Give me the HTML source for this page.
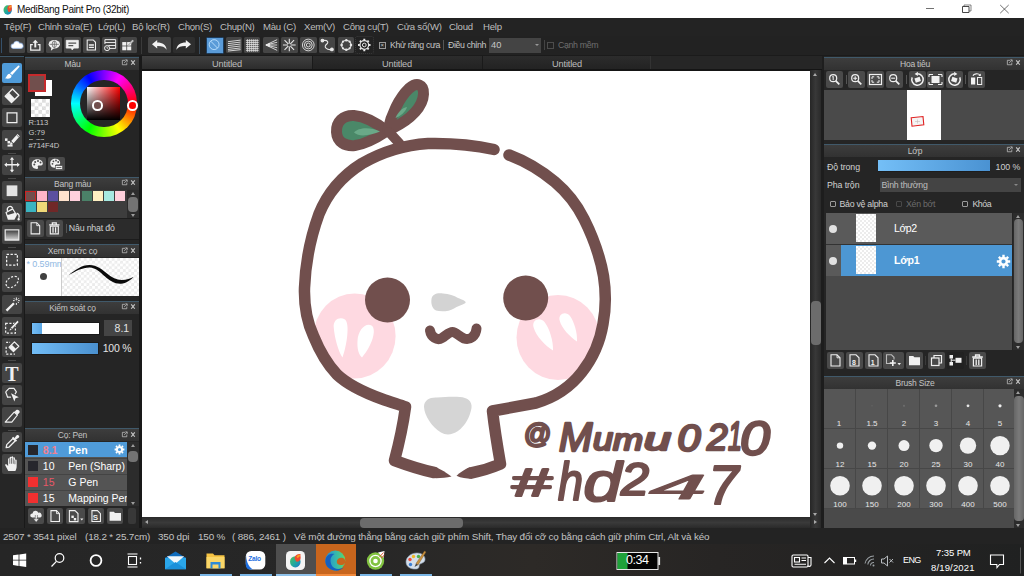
<!DOCTYPE html>
<html lang="vi">
<head>
<meta charset="utf-8">
<title>MediBang Paint Pro (32bit)</title>
<style>
*{box-sizing:border-box;margin:0;padding:0}
html,body{width:1024px;height:576px;overflow:hidden;background:#1e1e1e}
body{position:relative;font-family:"Liberation Sans","DejaVu Sans",sans-serif;font-size:9.5px;color:#cfcfcf;line-height:1}
.a{position:absolute}
.t{position:absolute;white-space:nowrap;line-height:1}
#titlebar{left:0;top:0;width:1024px;height:18px;background:#fff}
#menubar{left:0;top:18px;width:1024px;height:18px;background:#232323}
#toolbar{left:0;top:36px;width:1024px;height:20px;background:#222}
.m{position:absolute;top:21.8px;font-size:9.6px;color:#bebebe;white-space:nowrap;letter-spacing:-0.25px}
.tb{position:absolute;top:37px;width:16.6px;height:16px;background:#454545;border-radius:1.5px}
.tb svg,.lb svg,.nb svg,.sb svg{position:absolute;left:0;top:0;width:100%;height:100%}
.lb{position:absolute;left:2px;width:20px;height:19.5px;background:#444;border-radius:2px}
.ph{position:absolute;height:13px;background:linear-gradient(#3d3d3d,#323232);border-top:1px solid #40596a;font-size:8.5px;letter-spacing:-0.2px;color:#c4c4c4;text-align:center;line-height:12px}
.ph i{position:absolute;top:2px;width:6px;height:7px}
.nb{position:absolute;top:71px;width:17px;height:17px;background:#4a4a4a;border-radius:2px}
.sb{position:absolute;width:17px;height:17px;background:#4a4a4a;border-radius:2px}
.st{font-size:9.9px;color:#c4c4c4;letter-spacing:-0.16px}
</style>
</head>
<body>
<!-- ===== title bar ===== -->
<div id="titlebar" class="a"></div>
<div id="menubar" class="a"></div>
<div id="toolbar" class="a"></div>
<!-- title -->
<svg class="a" style="left:3px;top:3.500px" width="10" height="11" viewBox="0 0 10 11"><defs><linearGradient id="lg1" x1="0" y1="0" x2="1" y2="1"><stop offset="0" stop-color="#52c25a"/><stop offset=".55" stop-color="#1fa8a0"/><stop offset="1" stop-color="#1f6fd0"/></linearGradient></defs><ellipse cx="4.700" cy="6" rx="4.200" ry="4.700" fill="url(#lg1)"/><path d="M4.300 4.500C4.500 2 6.500 0.800 8.600 1.200C8.300 2.500 9.200 3.800 8.800 5.600C8.400 7.400 6.800 8.200 5.200 7.800Z" fill="#ee4a30"/><path d="M5.800 3.200C6.500 2 7.600 1.500 8.500 1.600C8.300 2.800 7.600 4 6.400 4.500Z" fill="#f6a21e"/></svg>
<div class="t" style="left:17px;top:4.500px;font-size:10px;color:#111;letter-spacing:-0.31px" id="ttl">MediBang Paint Pro (32bit)</div>
<svg class="a" style="left:920px;top:0" width="104" height="18" viewBox="0 0 104 18" fill="none" stroke="#333" stroke-width="0.7">
<path d="M6 8.500H14"/>
<path d="M42.500 6.500H49V12.500H42.500Z" stroke-width=".9"/><path d="M44 6.500V5H51V11H49" stroke-width=".6"/>
<path d="M80.200 5L88.700 13.200M88.700 5L80.200 13.200"/>
</svg>

<!-- menu -->
<div class="m" style="left:4px">Tệp(F)</div>
<div class="m" style="left:38px">Chỉnh sửa(E)</div>
<div class="m" style="left:98px">Lớp(L)</div>
<div class="m" style="left:132px">Bộ lọc(R)</div>
<div class="m" style="left:178px">Chọn(S)</div>
<div class="m" style="left:220px">Chụp(N)</div>
<div class="m" style="left:263px">Màu (C)</div>
<div class="m" style="left:304px">Xem(V)</div>
<div class="m" style="left:343px">Công cụ(T)</div>
<div class="m" style="left:397px">Cửa sổ(W)</div>
<div class="m" style="left:449px">Cloud</div>
<div class="m" style="left:483px">Help</div>

<!-- toolbar -->
<div class="a" style="left:1px;top:38px;width:1px;height:15px;background:#35506a"></div>
<div class="a" style="left:0;top:54.5px;width:1024px;height:1.5px;background:#1b1b1b"></div>
<div class="tb" style="left:8.5px"><svg viewBox="0 0 17 16"><path d="M4.3 11.5a2.3 2.3 0 0 1 .3-4.6 3.3 3.3 0 0 1 6.3-.6 2.7 2.7 0 0 1 1.6 5.2Z" fill="#fff" stroke="#9cc4ff" stroke-width="1.2" stroke-opacity=".55"/></svg></div>
<div class="tb" style="left:27.2px"><svg viewBox="0 0 17 16" fill="none" stroke="#f0f0f0" stroke-width="1.3"><path d="M6 7.5H3.8V13.3H13.2V7.5H11"/><path d="M8.5 10.5V4.5" stroke-width="2"/><path d="M5.6 5.8L8.5 2.6L11.4 5.8Z" fill="#f0f0f0" stroke="none"/></svg></div>
<div class="tb" style="left:45.8px"><svg viewBox="0 0 17 16"><ellipse cx="8.5" cy="7.3" rx="5.8" ry="4.3" fill="#f0f0f0"/><path d="M5.5 10.5L5 14L8.5 11Z" fill="#f0f0f0"/><g stroke="#555" stroke-width=".7" fill="none"><ellipse cx="8.5" cy="7.3" rx="2.2" ry="3.4"/><path d="M3.8 7.3H13.2M8.5 3.8V10.8"/></g></svg></div>
<div class="tb" style="left:64.4px"><svg viewBox="0 0 17 16"><path d="M2.3 3.2H14.7V11.2H10L8.5 13L7 11.2H2.3Z" fill="#f0f0f0" stroke="#f0f0f0" stroke-width=".8" stroke-linejoin="round"/><path d="M4.5 6H12.5M4.5 8.6H9.5" stroke="#555" stroke-width="1.2"/></svg></div>
<div class="tb" style="left:83px"><svg viewBox="0 0 17 16" fill="none" stroke="#f0f0f0" stroke-width="1.1"><path d="M4.3 2.8H10.5L12.8 5.2V13.2H4.3Z"/><path d="M6 8H11.2M6 10.5H11.2" stroke-width="1.4"/></svg></div>
<div class="tb" style="left:101.8px"><svg viewBox="0 0 17 16" fill="none" stroke="#f0f0f0" stroke-width="1"><path d="M3 2.5H14V11.5H8M3 2.5V7M3 5.5H14M6.5 8.5H14"/><circle cx="5.2" cy="11.2" r="2.6"/><path d="M5.2 9.8V11.3H6.4" stroke-width=".8"/></svg></div>
<div class="tb" style="left:120.2px"><svg viewBox="0 0 17 16"><g fill="#f0f0f0"><rect x="2.3" y="5" width="4.2" height="3.6"/><rect x="7.3" y="5" width="4.2" height="3.6"/><rect x="2.3" y="9.4" width="4.2" height="4"/><rect x="7.3" y="9.4" width="4.2" height="4"/></g><path d="M8.5 8.2L13.5 3.2" stroke="#ddd" stroke-width="1.8"/><path d="M8.5 8.2L13.5 3.2" stroke="#777" stroke-width=".6"/></svg></div>
<div class="a" style="left:141px;top:37px;width:1px;height:17px;background:#3a3a3a"></div>
<div class="tb" style="left:148px;width:23px"><svg viewBox="0 0 23 16"><path d="M4 7.2L9.2 3V5.6C14.5 5.6 18.2 8 18.6 12.8C16.8 10 13.8 9 9.2 9.1V11.4Z" fill="#f2f2f2"/></svg></div>
<div class="tb" style="left:173.2px;width:21.5px;background:#2e2e2e"><svg viewBox="0 0 21.5 16"><path d="M18 7.2L12.8 3V5.6C7.5 5.6 3.8 8 3.4 12.8C5.2 10 8.2 9 12.8 9.1V11.4Z" fill="#f2f2f2"/></svg></div>
<div class="a" style="left:198.6px;top:37px;width:1px;height:17px;background:#3b4c5c"></div>
<div class="tb" style="left:205.5px;top:36.5px;width:18px;height:17px;background:#5a9bd8;border:1px solid #1d3c5c"><svg viewBox="0 0 18 17" fill="none" stroke="#bfe3ff" stroke-width="1"><circle cx="8" cy="7.5" r="5.6"/><path d="M4.2 3.6L11.8 11.4"/></svg></div>
<div class="tb" style="left:225.7px"><svg viewBox="0 0 17 16" stroke="#e8e8e8" stroke-width=".9"><path d="M2 4.6L15 3M2 6.6L15 5M2 8.6L15 7M2 10.6L15 9M2 12.6L15 11M2 14.2L15 12.8"/></svg></div>
<div class="tb" style="left:243.7px"><svg viewBox="0 0 17 16" stroke="#e8e8e8" stroke-width=".8"><path d="M2 3.5H15M2 5.5H15M2 7.5H15M2 9.5H15M2 11.5H15M2 13.5H15M3.5 2V15M5.5 2V15M7.5 2V15M9.5 2V15M11.5 2V15M13.5 2V15"/></svg></div>
<div class="tb" style="left:262.7px"><svg viewBox="0 0 17 16" stroke="#e8e8e8" stroke-width=".9" fill="none"><path d="M3 8L14.5 2.5M3 8L14.5 5.2M3 8H14.5M3 8L14.5 10.8M3 8L14.5 13.5"/><path d="M2.5 8L7 5.8V10.2Z" fill="#e8e8e8" stroke="none"/></svg></div>
<div class="tb" style="left:281.2px"><svg viewBox="0 0 17 16" stroke="#e8e8e8" stroke-width="1.1"><path d="M8.5 1.5V14.5M2 8H15M3.6 3.1L13.4 12.9M13.4 3.1L3.6 12.9"/><circle cx="8.5" cy="8" r="1.6" fill="#454545" stroke="none"/></svg></div>
<div class="tb" style="left:300px"><svg viewBox="0 0 17 16" stroke="#e8e8e8" stroke-width=".9" fill="none"><circle cx="8.5" cy="8" r="6"/><circle cx="8.5" cy="8" r="4"/><circle cx="8.5" cy="8" r="2"/></svg></div>
<div class="tb" style="left:318.7px"><svg viewBox="0 0 17 16" stroke="#e8e8e8" stroke-width="1.1" fill="none"><path d="M3.5 3.5C9 2.5 10.5 5 7.5 7.5C4.5 10 8 13.5 13 12.5"/><circle cx="3.5" cy="3.5" r="1.4" fill="#e8e8e8"/><circle cx="13.2" cy="12.5" r="1.4" fill="#e8e8e8"/></svg></div>
<div class="tb" style="left:337.5px"><svg viewBox="0 0 17 16" stroke="#e8e8e8" fill="none"><circle cx="8.5" cy="8" r="4.8" stroke-width="1.2"/><g fill="#e8e8e8" stroke="none"><circle cx="8.5" cy="3.2" r="1.3"/><circle cx="8.5" cy="12.8" r="1.3"/><circle cx="3.7" cy="8" r="1.3"/><circle cx="13.3" cy="8" r="1.3"/><circle cx="5.1" cy="4.6" r="1.1"/><circle cx="11.9" cy="4.6" r="1.1"/><circle cx="5.1" cy="11.4" r="1.1"/><circle cx="11.9" cy="11.4" r="1.1"/></g></svg></div>
<div class="tb" style="left:356.2px;background:#222;outline:1px dotted #3a3a3a"><svg viewBox="0 0 17 16" fill="none" stroke="#e8e8e8"><circle cx="8.5" cy="8" r="4.4" stroke-width="1.2"/><circle cx="8.5" cy="8" r="1.9" stroke-width="1"/><path d="M8.5 1.6V3.4M8.5 12.6V14.4M2.1 8H3.9M13.1 8H14.9M4 3.5L5.3 4.8M11.7 11.2L13 12.5M13 3.5L11.7 4.8M5.3 11.2L4 12.5" stroke-width="2"/></svg></div>
<div class="a" style="left:379px;top:42px;width:7px;height:7px;border:1px solid #999;background:#2a2a2a"></div>
<div class="t" style="left:380.5px;top:42.4px;font-size:6px;color:#ccc">×</div>
<div class="t tx" style="left:390px;top:41px;font-size:8.8px;color:#c6c6c6;letter-spacing:-0.36px">Khử răng cưa</div>
<div class="a" style="left:443px;top:40px;width:1px;height:10px;background:#555"></div>
<div class="t tx" style="left:448px;top:41px;font-size:8.8px;color:#c6c6c6;letter-spacing:-0.36px">Điều chỉnh</div>
<div class="a" style="left:489px;top:38px;width:52px;height:15px;background:#444"></div>
<div class="t" style="left:491px;top:41px;font-size:9.3px;color:#c6c6c6">40</div>
<div class="a" style="left:535px;top:44px;width:0;height:0;border-left:2px solid transparent;border-right:2px solid transparent;border-top:2.5px solid #999"></div>
<div class="a" style="left:543.5px;top:40px;width:1px;height:10px;background:#444"></div>
<div class="a" style="left:547px;top:42px;width:7px;height:7px;border:1px solid #4c4c4c"></div>
<div class="t tx" style="left:558px;top:41px;font-size:8.8px;color:#6e6e6e;letter-spacing:-0.36px">Cạnh mềm</div>

<!-- left tool strip -->
<div class="a" style="left:0;top:56px;width:24px;height:472px;background:#262626"></div>
<div class="a" style="left:0;top:56px;width:24px;height:1px;background:#3e5666"></div>
<div class="lb" style="top:63.2px;background:#4f9bd9"><svg viewBox="0 0 20 20"><path d="M16.300 2.800C17.200 2.200 18.200 3.200 17.500 4.100L10.200 12.400L8 10.400Z" fill="#fff"/><path d="M7.400 11L9.600 13C9.400 15.600 6.600 16.800 2.800 15.600C4.800 14.600 4.400 11.600 7.400 11Z" fill="#fff"/></svg></div>
<div class="lb" style="top:85.7px"><svg viewBox="0 0 20 20"><path d="M3 10.5L10.5 3L17 9.5L9.5 17Z" fill="none" stroke="#f0f0f0" stroke-width="1.4" stroke-linejoin="round"/><path d="M3.3 10.7L7 7L13 13L9.4 16.6Z" fill="#f0f0f0"/></svg></div>
<div class="lb" style="top:107.7px"><svg viewBox="0 0 20 20"><rect x="5" y="5" width="10" height="10" fill="none" stroke="#f0f0f0" stroke-width="1.3"/></svg></div>
<div class="lb" style="top:130.2px"><svg viewBox="0 0 20 20"><path d="M9.200 11.400L15.600 4.200L18 6.400L11.600 13.600Z" fill="#f2f2f2"/><path d="M8.700 12L10.900 14L7.800 15Z" fill="#f2f2f2"/><path d="M14.800 5.200L17.200 7.400" stroke="#444" stroke-width=".7"/><g fill="#f2f2f2"><rect x="2.800" y="8.600" width="2.600" height="2.600"/><rect x="5.400" y="11.200" width="2.600" height="2.600"/><rect x="8" y="14.600" width="2.600" height="2.400"/><rect x="5.400" y="15" width="2.600" height="2"/></g></svg></div>
<div class="a" style="left:8px;top:152.5px;width:8px;height:1px;background:#4a4a4a"></div>
<div class="lb" style="top:155.2px"><svg viewBox="0 0 20 20" stroke="#f0f0f0" stroke-width="1.3" fill="#f0f0f0"><path d="M10 3.5V16.5M3.5 10H16.5" fill="none"/><path d="M10 2L12.2 4.8H7.8ZM10 18L12.2 15.2H7.8ZM2 10L4.8 7.8V12.2ZM18 10L15.2 7.8V12.2Z" stroke="none"/></svg></div>
<div class="a" style="left:8px;top:178px;width:8px;height:1px;background:#4a4a4a"></div>
<div class="lb" style="top:180.7px"><svg viewBox="0 0 20 20"><rect x="4.5" y="4.5" width="11" height="11" fill="#e4e4e4"/></svg></div>
<div class="lb" style="top:202.7px"><svg viewBox="0 0 20 20"><path d="M3.200 9.500L10.800 5.200L15.200 12L12.500 17.200H5.800Z" fill="#f2f2f2"/><path d="M4.600 10L10.600 6.800L12.600 10.200L5.600 12.400Z" fill="#444"/><path d="M5.400 8.200C4.200 4.200 8.400 1.400 10.800 5.400" fill="none" stroke="#f2f2f2" stroke-width="1.300"/><path d="M14.800 10.500C17 11.500 17.800 13.400 17 15.200" fill="none" stroke="#f2f2f2" stroke-width="1.400"/><ellipse cx="16.800" cy="16.600" rx="1.100" ry="1.400" fill="#f2f2f2"/></svg></div>
<div class="lb" style="top:224.7px"><svg viewBox="0 0 20 20"><defs><linearGradient id="gr1" x1="0" y1="0" x2="0" y2="1"><stop offset="0" stop-color="#3a3a3a"/><stop offset="1" stop-color="#d8d8d8"/></linearGradient></defs><rect x="3" y="5" width="14" height="10.5" fill="url(#gr1)" stroke="#f0f0f0" stroke-width="1.2"/></svg></div>
<div class="a" style="left:8px;top:247px;width:8px;height:1px;background:#4a4a4a"></div>
<div class="lb" style="top:250.2px"><svg viewBox="0 0 20 20"><rect x="4.5" y="4.5" width="11" height="11" fill="none" stroke="#f0f0f0" stroke-width="1.3" stroke-dasharray="2.4 1.6"/></svg></div>
<div class="lb" style="top:272.2px"><svg viewBox="0 0 20 20"><path d="M4.5 14.5C2 10 7 4.5 13 4.5C17.5 4.5 17.5 9 14.5 12.5C11.5 15.8 6.5 17.5 4.5 14.5Z" fill="none" stroke="#f0f0f0" stroke-width="1.2" stroke-dasharray="2.2 1.6"/></svg></div>
<div class="lb" style="top:294.7px"><svg viewBox="0 0 20 20"><path d="M3.5 15.2L11.2 7.6L12.8 9.2L5.2 16.8Z" fill="#f0f0f0"/><path d="M14.5 2.5V5.5M14.5 8.2V10.2M11 5.8H12.8M16.2 5.8H18M12 3.4L13.2 4.6M17 3.4L15.8 4.6M17 8.2L15.8 7" stroke="#f0f0f0" stroke-width="1"/></svg></div>
<div class="lb" style="top:316.7px"><svg viewBox="0 0 20 20"><rect x="3.5" y="6.5" width="10" height="10" fill="none" stroke="#f0f0f0" stroke-width="1.2" stroke-dasharray="2.2 1.6"/><path d="M8.5 11L15.5 3.6L17.2 5.2L10.2 12.6Z" fill="#f0f0f0" stroke="#444" stroke-width=".6"/><path d="M8.2 11.6L9.7 13L7.4 13.8Z" fill="#f0f0f0"/></svg></div>
<div class="lb" style="top:337.7px"><svg viewBox="0 0 20 20"><path d="M4 9V16.5H13" fill="none" stroke="#f0f0f0" stroke-width="1.2" stroke-dasharray="2.2 1.6"/><path d="M4 4.5H8" fill="none" stroke="#f0f0f0" stroke-width="1.2" stroke-dasharray="2 1.4"/><path d="M7 9.5L12.5 4L17 8.5L11.5 14Z" fill="none" stroke="#f0f0f0" stroke-width="1.2" stroke-linejoin="round"/><path d="M7.2 9.7L9.8 7L14.2 11.4L11.6 14Z" fill="#f0f0f0"/></svg></div>
<div class="a" style="left:8px;top:360px;width:8px;height:1px;background:#4a4a4a"></div>
<div class="lb" style="top:363.2px"><div class="t" style="left:3.2px;top:0.5px;font-family:'Liberation Serif','DejaVu Serif',serif;font-weight:bold;font-size:20px;color:#f0f0f0">T</div></div>
<div class="lb" style="top:385.2px"><svg viewBox="0 0 20 20"><path d="M3.5 7L7 3.5H12L14.5 7L13 9.5M8.5 12.5H5.5Z" fill="none" stroke="#f0f0f0" stroke-width="1.2" stroke-linejoin="round"/><path d="M3.5 7L5.5 12.5" stroke="#f0f0f0" stroke-width="1.2"/><path d="M9 8.5L17 12.5L13.6 13.6L12.4 17Z" fill="#f0f0f0"/></svg></div>
<div class="lb" style="top:407.2px"><svg viewBox="0 0 20 20"><path d="M3 15.5L12.2 5.2L15.6 8.2L9.8 15.5Z" fill="none" stroke="#f0f0f0" stroke-width="1.2" stroke-linejoin="round"/><path d="M12.4 5L14.4 3.2C15.4 2.4 16.4 2.8 17.2 3.6C18 4.4 18.2 5.4 17.4 6.2L15.6 8Z" fill="#f0f0f0"/></svg></div>
<div class="a" style="left:8px;top:429.5px;width:8px;height:1px;background:#4a4a4a"></div>
<div class="lb" style="top:432.2px"><svg viewBox="0 0 20 20"><path d="M4 16L4.6 13L11 6.6L13.4 9L7 15.4Z" fill="none" stroke="#f0f0f0" stroke-width="1.3" stroke-linejoin="round"/><path d="M10.6 5.4L14.6 9.4" stroke="#f0f0f0" stroke-width="1.8"/><path d="M12.4 6.4L14.6 3.6C15.4 2.8 16.4 3 17 3.6C17.6 4.2 17.6 5.2 16.8 5.8L14 7.8Z" fill="#f0f0f0"/></svg></div>
<div class="lb" style="top:454.2px"><svg viewBox="0 0 20 20"><path d="M6.2 17.5L3 11.6C2.6 10.6 3.8 10 4.6 10.8L6 12.4V5.2C6 4 7.6 4 7.6 5.2V3.6C7.6 2.4 9.4 2.4 9.4 3.6V3.2C9.4 2 11.2 2 11.2 3.2V4.2C11.2 3 13 3 13 4.2V6.6C13 5.4 14.8 5.4 14.8 6.6V12.6C14.8 15 14 16.4 13.4 17.5Z" fill="#f0f0f0"/><path d="M7.7 5V10M9.5 4V10M11.3 4.4V10M13 6.5V10.5" stroke="#444" stroke-width=".7"/></svg></div>

<!-- left panels -->
<div class="a" style="left:24px;top:56px;width:115px;height:472px;background:#252525"></div>
<div class="a" style="left:139px;top:56px;width:3px;height:472px;background:#191919"></div>
<div class="a" style="left:24px;top:56px;width:1px;height:472px;background:#191919"></div>
<!-- Màu -->
<div class="ph" style="left:25px;top:56.5px;width:114px;padding-right:19px">Màu<svg class="a" style="left:96px;top:1.8px" width="16" height="7.1" viewBox="0 0 18 8" fill="none" stroke="#bbb"><path d="M4.5 1.5H1.5V6.5H6.5V4" stroke-width=".9"/><path d="M3.5 4.5L6.8 1.2M4.8 1H7V3.2" stroke-width=".9"/><path d="M11.5 1.5L15.5 6.5M15.5 1.5L11.5 6.5" stroke-width="1.3" stroke="#c8c8c8"/></svg></div>
<div class="a" style="left:35px;top:80px;width:17px;height:16px;background:#fff"></div>
<div class="a" style="left:28px;top:73.5px;width:18px;height:18px;background:#714f4d;border:2px solid #c52a2c"></div>
<div class="a" style="left:31px;top:98.5px;width:18.5px;height:18.5px;background-color:#fff;background-image:linear-gradient(45deg,#ddd 25%,transparent 25%,transparent 75%,#ddd 75%),linear-gradient(45deg,#ddd 25%,transparent 25%,transparent 75%,#ddd 75%);background-size:7.4px 7.4px;background-position:0 0,3.7px 3.7px"></div>
<div class="t" style="left:28.5px;top:119px;font-size:7.6px;color:#c8c8c8">R:113</div>
<div class="t" style="left:28.5px;top:128.5px;font-size:7.6px;color:#c8c8c8">G:79</div>
<div class="a" style="left:28.5px;top:138px;width:30px;height:2px;overflow:hidden"><div class="t" style="left:0;top:0;font-size:7.6px;color:#c8c8c8">B:77</div></div>
<div class="t" style="left:28.5px;top:141.5px;font-size:7.6px;color:#c8c8c8;letter-spacing:-0.1px">#714F4D</div>
<div class="a" style="left:70.6px;top:70.2px;width:66.8px;height:66.8px;border-radius:50%;background:conic-gradient(from 90deg,#f00,#ff0,#0f0,#0ff,#00f,#f0f,#f00)"></div>
<div class="a" style="left:80.4px;top:80px;width:47.2px;height:47.2px;border-radius:50%;background:#252525"></div>
<div class="a" style="left:87.2px;top:87.2px;width:33px;height:33px;background:linear-gradient(to bottom,rgba(0,0,0,0),#000),linear-gradient(to right,#fff,#f00)"></div>
<div class="a" style="left:92.1px;top:100.3px;width:10.6px;height:10.6px;border-radius:50%;border:2.2px solid #fff;background:#714f4d"></div>
<div class="a" style="left:127px;top:100.3px;width:10.6px;height:10.6px;border-radius:50%;border:2.2px solid #fff;background:#f00"></div>
<div class="sb" style="left:29.3px;top:157px;width:16.5px;height:14px"><svg viewBox="0 0 16.5 14"><path d="M8.2 2.2C4.8 2.2 2.8 4.6 2.8 7.2C2.8 10 5 11.9 7.8 11.9C9.4 11.9 9.2 10.6 8.8 9.9C8.4 9 9 8.4 10 8.4H12C13.2 8.4 13.8 7.6 13.8 6.6C13.8 4 11.4 2.2 8.2 2.2Z" fill="#f0f0f0"/><g fill="#4a4a4a"><circle cx="5.3" cy="7.6" r="1"/><circle cx="6.2" cy="4.9" r="1"/><circle cx="9" cy="4" r="1"/><circle cx="11.5" cy="5.6" r="1"/></g></svg></div>
<div class="sb" style="left:48.2px;top:157px;width:16.5px;height:14px"><svg viewBox="0 0 16.5 14"><path d="M7.2 1.8C4 1.8 2.2 4 2.2 6.4C2.2 9 4.2 10.7 6.8 10.7C8.2 10.7 8 9.5 7.7 8.9C7.4 8.1 7.9 7.6 8.8 7.6H10.6C11.7 7.6 12.2 6.9 12.2 6C12.2 3.4 10.2 1.8 7.2 1.8Z" fill="#f0f0f0"/><g fill="#4a4a4a"><circle cx="4.5" cy="6.8" r=".9"/><circle cx="5.4" cy="4.3" r=".9"/><circle cx="8" cy="3.5" r=".9"/><circle cx="10.2" cy="5" r=".9"/></g><rect x="7.5" y="8.6" width="7" height="3.8" fill="#f0f0f0" stroke="#4a4a4a" stroke-width=".6"/><path d="M8.6 10.5H13.4" stroke="#4a4a4a" stroke-width=".8"/></svg></div>
<!-- Bang màu -->
<div class="ph" style="left:25px;top:176.5px;width:114px;padding-right:19px">Bang màu<svg class="a" style="left:96px;top:1.8px" width="16" height="7.1" viewBox="0 0 18 8" fill="none" stroke="#bbb"><path d="M4.5 1.5H1.5V6.5H6.5V4" stroke-width=".9"/><path d="M3.5 4.5L6.8 1.2M4.8 1H7V3.2" stroke-width=".9"/><path d="M11.5 1.5L15.5 6.5M15.5 1.5L11.5 6.5" stroke-width="1.3" stroke="#c8c8c8"/></svg></div>
<div class="a" style="left:25px;top:189.5px;width:102px;height:28.3px;background:#3d3d3d"></div>
<div class="a" style="left:127px;top:189.5px;width:12px;height:28px;background:#2c2c2c"></div>
<div class="a" style="left:25.3px;top:190.6px;width:10.6px;height:10.6px;background:#714f4d;border:1.7px solid #c22"></div>
<div class="a" style="left:37px;top:190.8px;width:10px;height:10.4px;background:#ffb5c8"></div>
<div class="a" style="left:48.2px;top:190.8px;width:10px;height:10.4px;background:#5b4f9f"></div>
<div class="a" style="left:59.2px;top:190.8px;width:10px;height:10.4px;background:#ffe3cd"></div>
<div class="a" style="left:70.3px;top:190.8px;width:10px;height:10.4px;background:#ffd0dc"></div>
<div class="a" style="left:81.5px;top:190.8px;width:10px;height:10.4px;background:#4b8168"></div>
<div class="a" style="left:92.8px;top:190.8px;width:10px;height:10.4px;background:#fff0c2"></div>
<div class="a" style="left:103.9px;top:190.8px;width:10px;height:10.4px;background:#a6e9e1"></div>
<div class="a" style="left:115.1px;top:190.8px;width:10px;height:10.4px;background:#ffd0dc"></div>
<div class="a" style="left:25.8px;top:202px;width:10px;height:10.2px;background:#3bb4c1"></div>
<div class="a" style="left:37px;top:202px;width:10px;height:10.2px;background:#efd878"></div>
<div class="a" style="left:48.2px;top:202px;width:10px;height:10.2px;background:#702828"></div>
<div class="a" style="left:130.5px;top:191.5px;width:0;height:0;border-left:2.5px solid transparent;border-right:2.5px solid transparent;border-bottom:3.2px solid #9c9c9c"></div>
<div class="a" style="left:128px;top:196.5px;width:10px;height:15.5px;border-radius:4px;background:#737373"></div>
<div class="a" style="left:130.5px;top:213.5px;width:0;height:0;border-left:2.5px solid transparent;border-right:2.5px solid transparent;border-top:3.2px solid #9c9c9c"></div>
<div class="a" style="left:25px;top:218px;width:114px;height:22px;background:#2b2b2b;border-top:1px solid #1c1c1c;border-bottom:1px solid #1c1c1c"></div>
<div class="sb" style="left:27px;top:220px;width:16.6px;height:16.6px"><svg viewBox="0 0 17 17" fill="none" stroke="#f0f0f0" stroke-width="1.1"><path d="M4.2 2.8H10L13 5.8V14.2H4.2Z"/><path d="M10 2.8V5.8H13" stroke-width=".9"/></svg></div>
<div class="sb" style="left:46.2px;top:220px;width:16.6px;height:16.6px"><svg viewBox="0 0 17 17" fill="none" stroke="#f0f0f0"><path d="M3.2 5H13.8M6.5 4.6V3H10.5V4.6" stroke-width="1.3"/><path d="M4.4 6.2H12.6V14.2H4.4Z" stroke-width="1.2"/><path d="M7.2 7.5V13M9.8 7.5V13" stroke-width="1.3"/></svg></div>
<div class="a" style="left:65.6px;top:224px;width:1px;height:9px;background:#555"></div>
<div class="t" style="left:68.8px;top:224.3px;font-size:8.8px;color:#cfcfcf;letter-spacing:-0.18px">Nâu nhạt đỏ</div>
<!-- Xem trước cọ -->
<div class="ph" style="left:25px;top:244px;width:114px;padding-right:19px">Xem trước cọ<svg class="a" style="left:96px;top:1.8px" width="16" height="7.1" viewBox="0 0 18 8" fill="none" stroke="#bbb"><path d="M4.5 1.5H1.5V6.5H6.5V4" stroke-width=".9"/><path d="M3.5 4.5L6.8 1.2M4.8 1H7V3.2" stroke-width=".9"/><path d="M11.5 1.5L15.5 6.5M15.5 1.5L11.5 6.5" stroke-width="1.3" stroke="#c8c8c8"/></svg></div>
<div class="a" style="left:24.5px;top:257.5px;width:114.5px;height:38px;background-color:#fff;background-image:linear-gradient(45deg,#ebebeb 25%,transparent 25%,transparent 75%,#ebebeb 75%),linear-gradient(45deg,#ebebeb 25%,transparent 25%,transparent 75%,#ebebeb 75%);background-size:5.6px 5.6px;background-position:0 0,2.8px 2.8px"></div>
<div class="a" style="left:24.5px;top:257.5px;width:37.5px;height:38px;background:#fff;border-right:1px solid #ccc;overflow:hidden"><div class="t" style="left:2px;top:2px;font-size:9px;color:#8fb8e2;letter-spacing:-0.1px">* 0.59mm</div><div class="a" style="left:15.4px;top:15.600px;width:7px;height:7px;border-radius:50%;background:#404040"></div></div>
<svg class="a" style="left:62px;top:257.5px" width="77" height="38" viewBox="62 257.500 77 38"><path d="M68.500 274.800C75 269.500 82 264.500 89.600 264.600C97 264.700 102 269 107 273C112 277 117 279.800 122 279.600C126.500 279.300 130.500 277.800 133.800 276.200C130.500 279.600 126.500 282.600 121 283.200C115 283.600 109.500 280 105 276C100 271.500 96 267.200 89.600 266.900C82.500 266.800 75.500 270.500 68.500 274.800Z" fill="#0a0a0a"/></svg>
<!-- Kiểm soát cọ -->
<div class="ph" style="left:25px;top:300.5px;width:114px;padding-right:19px">Kiểm soát cọ<svg class="a" style="left:96px;top:1.8px" width="16" height="7.1" viewBox="0 0 18 8" fill="none" stroke="#bbb"><path d="M4.5 1.5H1.5V6.5H6.5V4" stroke-width=".9"/><path d="M3.5 4.5L6.8 1.2M4.8 1H7V3.2" stroke-width=".9"/><path d="M11.5 1.5L15.5 6.5M15.5 1.5L11.5 6.5" stroke-width="1.3" stroke="#c8c8c8"/></svg></div>
<div class="a" style="left:31px;top:321.5px;width:68.5px;height:13px;background:#fff;border:1px solid #1a1a1a"></div>
<div class="a" style="left:32px;top:322.5px;width:10px;height:11px;background:linear-gradient(90deg,#74bdf5,#5aa6e4)"></div>
<div class="a" style="left:104.3px;top:320px;width:27.3px;height:15.8px;background:#454545"></div>
<div class="t" style="left:114.6px;top:322.8px;font-size:10.5px;color:#e4e4e4">8.1</div>
<div class="a" style="left:31px;top:341.5px;width:67.5px;height:13px;background:linear-gradient(90deg,#72bdf6,#4a90cf);border:1px solid #1a1a1a"></div>
<div class="t" style="left:102.7px;top:343px;font-size:10.5px;color:#e4e4e4;letter-spacing:-0.2px">100 %</div>
<!-- Cọ: Pen -->
<div class="ph" style="left:25px;top:428px;width:114px;padding-right:19px">Cọ: Pen<svg class="a" style="left:96px;top:1.8px" width="16" height="7.1" viewBox="0 0 18 8" fill="none" stroke="#bbb"><path d="M4.5 1.5H1.5V6.5H6.5V4" stroke-width=".9"/><path d="M3.5 4.5L6.8 1.2M4.8 1H7V3.2" stroke-width=".9"/><path d="M11.5 1.5L15.5 6.5M15.5 1.5L11.5 6.5" stroke-width="1.3" stroke="#c8c8c8"/></svg></div>
<div class="a" style="left:25.3px;top:441.5px;width:101.7px;height:64.5px;background:#545454;overflow:hidden;font-size:10.5px;color:#fff">
 <div class="a" style="left:0;top:0.6px;width:102px;height:15.4px;background:#4f9bd9"></div>
 <div class="a" style="left:0;top:16px;width:102px;height:1px;background:#444"></div>
 <div class="a" style="left:0;top:32px;width:102px;height:1px;background:#444"></div>
 <div class="a" style="left:0;top:48px;width:102px;height:1px;background:#444"></div>
 <div class="a" style="left:3px;top:3.2px;width:10.2px;height:10.6px;background:#26262c"></div>
 <div class="a" style="left:3px;top:19px;width:10.2px;height:10.6px;background:#26262c"></div>
 <div class="a" style="left:3px;top:35px;width:10.2px;height:10.6px;background:#f13030"></div>
 <div class="a" style="left:3px;top:51px;width:10.2px;height:10.6px;background:#f13030"></div>
 <div class="t" style="left:17.5px;top:3px;font-weight:bold;color:#f0808e">8.1</div>
 <div class="t" style="left:17.5px;top:19px">10</div>
 <div class="t" style="left:17.5px;top:35px;color:#ea5868">15</div>
 <div class="t" style="left:17.5px;top:51px">15</div>
 <div class="t" style="left:43px;top:3px;font-weight:bold">Pen</div>
 <div class="t" style="left:43px;top:19px">Pen (Sharp)</div>
 <div class="t" style="left:43px;top:35px">G Pen</div>
 <div class="t" style="left:43px;top:51px">Mapping Pen</div>
 <svg class="a" style="left:88.5px;top:2.8px" width="11" height="11" viewBox="0 0 11 11" fill="none" stroke="#fff"><circle cx="5.5" cy="5.5" r="2.6" stroke-width="2"/><path d="M5.5 0.6V2M5.5 9V10.4M0.6 5.5H2M9 5.5H10.4M2 2L3 3M8 8L9 9M9 2L8 3M3 8L2 9" stroke-width="1.8"/></svg>
</div>
<div class="a" style="left:127px;top:441.5px;width:12px;height:64.5px;background:#2c2c2c"></div>
<div class="a" style="left:130.5px;top:444px;width:0;height:0;border-left:2.5px solid transparent;border-right:2.5px solid transparent;border-bottom:3.2px solid #9c9c9c"></div>
<div class="a" style="left:128px;top:450.5px;width:10px;height:11.5px;border-radius:4px;background:#737373"></div>
<div class="a" style="left:130.5px;top:501.5px;width:0;height:0;border-left:2.5px solid transparent;border-right:2.5px solid transparent;border-top:3.2px solid #9c9c9c"></div>
<div class="sb" style="left:27.5px;top:508.4px;width:16.5px;height:16px"><svg viewBox="0 0 16.5 16"><path d="M4.2 9.6a2.1 2.1 0 0 1 .3-4.2 3 3 0 0 1 5.8-.6 2.5 2.5 0 0 1 1.6 4.8Z" fill="#f0f0f0"/><path d="M8.2 7V12" stroke="#4a4a4a" stroke-width="2.6"/><path d="M8.2 7V11.6" stroke="#f0f0f0" stroke-width="1.5"/><path d="M5.4 10.8H11L8.2 14.2Z" fill="#f0f0f0" stroke="#4a4a4a" stroke-width=".5"/></svg></div>
<div class="sb" style="left:47px;top:508.4px;width:16.3px;height:16px"><svg viewBox="0 0 16.5 16" fill="none" stroke="#f0f0f0" stroke-width="1.1"><path d="M4 2.6H9.6L12.6 5.6V13.6H4Z"/><path d="M9.6 2.6V5.6H12.6" stroke-width=".9"/></svg></div>
<div class="sb" style="left:65.5px;top:508.4px;width:19.2px;height:16px"><svg viewBox="0 0 19.2 16" fill="none" stroke="#f0f0f0" stroke-width="1.1"><path d="M3.4 2.6H9L12 5.6V13.6H3.4Z"/><rect x="5.4" y="7.6" width="2.4" height="2.4" fill="#f0f0f0" stroke="none"/><rect x="7.8" y="10" width="2.4" height="2.4" fill="#f0f0f0" stroke="none"/><path d="M14.2 10.6H17.4L15.8 12.6Z" fill="#f0f0f0" stroke="none"/></svg></div>
<div class="sb" style="left:87.6px;top:508.4px;width:16.3px;height:16px"><svg viewBox="0 0 16.5 16" fill="none" stroke="#f0f0f0" stroke-width="1.1"><path d="M4 2.6H9.6L12.6 5.6V13.6H4Z"/></svg><div class="t" style="left:5.2px;top:5.6px;font-size:8px;color:#f0f0f0;font-weight:bold">S</div></div>
<div class="sb" style="left:106.5px;top:508.4px;width:16.5px;height:16px"><svg viewBox="0 0 16.5 16"><path d="M2.6 3.8H6.8L8 5H14V12.8H2.6Z" fill="#f0f0f0"/></svg></div>
<div class="a" style="left:128.2px;top:508.4px;width:8px;height:16px;background:#383838;border-radius:2px"></div>

<!-- canvas tabs -->
<div class="a" style="left:142px;top:56px;width:680px;height:14px;background:#262626"></div>
<div class="a" style="left:142px;top:56px;width:170px;height:14px;background:linear-gradient(#404040,#2b2b2b)"></div>
<div class="a" style="left:312px;top:56px;width:170px;height:14px;background:linear-gradient(#2c2c2c,#222);border-left:1px solid #1a1a1a"></div>
<div class="a" style="left:482px;top:56px;width:169px;height:14px;background:linear-gradient(#2c2c2c,#222);border-left:1px solid #1a1a1a;border-right:1px solid #333"></div>
<div class="a" style="left:142px;top:69px;width:680px;height:1.5px;background:#151515"></div>
<div class="t" style="left:212px;top:60.3px;font-size:9.2px;color:#bdbdbd;letter-spacing:-0.14px">Untitled</div>
<div class="t" style="left:382px;top:60.3px;font-size:9.2px;color:#bdbdbd;letter-spacing:-0.14px">Untitled</div>
<div class="t" style="left:552px;top:60.3px;font-size:9.2px;color:#bdbdbd;letter-spacing:-0.14px">Untitled</div>
<!-- canvas -->
<div class="a" style="left:142px;top:70.5px;width:667.5px;height:446.5px;background:#fff"></div>
<svg class="a" style="left:142px;top:70px" width="668" height="447" viewBox="142 70 668 447">
<g fill="none" stroke="#714f4d" stroke-linecap="round" stroke-linejoin="round">
<!-- blush -->
<ellipse cx="354.6" cy="336" rx="41" ry="42.5" fill="#fed9e1" stroke="none"/>
<ellipse cx="558" cy="337.5" rx="41.5" ry="42.5" fill="#fed9e1" stroke="none"/>
<path d="M333.700 327C333 319.500 340 316 345 319.500C350 323.500 347 345 342.500 357.500C338.500 352 334.500 338 333.700 327Z" fill="#fff" stroke="none"/>
<path d="M357.500 341C358 330 365.500 322.500 371.500 325.500C377 329 372.500 345 362 357.500C358.500 355 357 348 357.500 341Z" fill="#fff" stroke="none"/>
<path d="M533.800 328C531 320 540 316.500 544.500 322C549.500 328.500 553.500 341 553 350.500C545.500 346 536 336 533.800 328Z" fill="#fff" stroke="none"/>
<path d="M559.800 321C557.500 313.500 566 310.500 570 316C574.500 322.500 577.500 333 577 341.500C570.500 337.500 561.500 328 559.800 321Z" fill="#fff" stroke="none"/>
<!-- gray -->
<path d="M431.5 299C432 294.5 437 292.5 443 293.5C449 294 454 295.5 458 298C462 299.5 466.5 301 465.5 303C462 305 457 306.5 454 308.5C449 311.5 441 312 436 310.5C431.5 308 431 303 431.5 299Z" fill="#d3d3d3" stroke="none"/>
<path d="M424 407C424 400 430 397 437 397.5C445 397 452 396.5 460 397C467 397.5 472.5 401 471.5 408C470 417 465 426 458 431C452 435 446 435.5 441 432.5C432 427 424.5 416 424 407Z" fill="#d5d5d5" stroke="none"/>
<!-- leaves -->
<path d="M387 131C378 124 366 116.500 354 115.500C343 115 336 122 336.500 132C337 142 345 146.500 355 145.500C367 144 378 137 387 131Z" stroke-width="11" fill="#4a8868"/>
<path d="M388 130C391 115 399 98 409 88.500C417 81.500 424 84.500 423.500 94C423 106 412 119 392 128.500Z" stroke-width="11" fill="#4a8868"/>
<path d="M354 132.500C358 127.500 370 126.500 380 131.500C372 134.500 360 138 354 132.500Z" fill="#6aa988" stroke="none"/>
<path d="M395.500 118C398 112 402 108 407 107C406 111.500 400 116.500 395.500 118Z" fill="#6aa988" stroke="none"/>
<path d="M389 132L399.500 143.500" stroke-width="10"/>
<!-- head -->
<path d="M494 149.500C476 145.500 452 143 428 143.500C404 145 382 152 362 163.500C342 176 328 192 319 214C311 236 305.500 262 304.500 288C304 306 307 322 313.500 336C320 352 327 364 337 374.500C347 384 364 392.500 382 399C392 402.500 400 405 405.500 407C404 418 401 436 394.500 460.500C408 465.500 422 470 434 472.500" stroke-width="11.5"/>
<path d="M509 155C525 161 541 170.500 555 182C568 193 577 205 584 219C593 237 600 256 603.500 276C606 292 606 308 603 324C600 342 593 358 582 372C572 385 556 397 536 403C520 406 504 409 492.500 411C494 424 497 444 500.500 464C490 468.500 481 471 471 473" stroke-width="11.5"/>
<path d="M435.250 466.900C441 469 447 473 451.500 476.500C446 478 439 478.300 432.750 478.100Z" fill="#714f4d" stroke="none"/>
<path d="M470 467.300C465 469 460 472.500 456.500 475.800C461 478 466.500 478.700 472 478.700Z" fill="#714f4d" stroke="none"/>
<!-- face -->
<circle cx="387.500" cy="300" r="22.500" fill="#714f4d" stroke="none"/>
<circle cx="525.700" cy="298" r="22.500" fill="#714f4d" stroke="none"/>
<path d="M430 330.500C431 337 437 341 442 338C446 335.500 449 332 452.500 332C456 332 459 336.500 464 338.500C470 340.500 476 336 476.500 328.500" stroke-width="10"/>
</g>
<!-- handwriting signature (real text) -->
<g fill="#714f4d" stroke="#714f4d" stroke-linejoin="round" stroke-linecap="round" font-family="'Liberation Sans','DejaVu Sans',sans-serif" font-style="italic">
<text x="523.500 559 593 613 644 677.500 707 728 740" y="442.500 450.500 449.500 449.500 450 451 449.500 449.500 455" font-size="40" stroke-width="2.400"><tspan font-size="27">@</tspan>M<tspan font-size="31" textLength="20" lengthAdjust="spacingAndGlyphs">u</tspan><tspan font-size="30" textLength="30" lengthAdjust="spacingAndGlyphs">m</tspan><tspan font-size="31" textLength="27" lengthAdjust="spacingAndGlyphs">u</tspan><tspan font-size="36" textLength="23" lengthAdjust="spacingAndGlyphs">0</tspan><tspan font-size="37">2</tspan><tspan font-size="40" textLength="14" lengthAdjust="spacingAndGlyphs">1</tspan><tspan font-size="49" textLength="30" lengthAdjust="spacingAndGlyphs">0</tspan></text>
<text x="511 558 583.500 621 649 708.500" y="496 500 501 494.500 498.500 504" font-size="50" stroke-width="2.200"><tspan font-size="39" textLength="40" lengthAdjust="spacingAndGlyphs">#</tspan><tspan font-size="53" textLength="25" lengthAdjust="spacingAndGlyphs">h</tspan><tspan font-size="55" textLength="38" lengthAdjust="spacingAndGlyphs">d</tspan><tspan font-size="46" textLength="28" lengthAdjust="spacingAndGlyphs">2</tspan><tspan font-size="35" textLength="58" lengthAdjust="spacingAndGlyphs" stroke-width="1">4</tspan><tspan font-size="55" textLength="30" lengthAdjust="spacingAndGlyphs">7</tspan></text>
</g>
</svg>
<!-- canvas scrollbars -->
<div class="a" style="left:809.5px;top:70px;width:11px;height:458px;background:linear-gradient(90deg,#262626,#383838 50%,#2a2a2a)"></div>
<div class="a" style="left:820.5px;top:70px;width:3.5px;height:458px;background:#1d1d1d"></div>
<div class="a" style="left:812.5px;top:72.5px;width:0;height:0;border-left:2.5px solid transparent;border-right:2.5px solid transparent;border-bottom:3.5px solid #a8a8a8"></div>
<div class="a" style="left:810.5px;top:300.5px;width:10px;height:44px;border-radius:4px;background:#6c6c6c"></div>
<div class="a" style="left:812.5px;top:512.5px;width:0;height:0;border-left:2.5px solid transparent;border-right:2.5px solid transparent;border-top:3.5px solid #a8a8a8"></div>
<div class="a" style="left:142px;top:517px;width:668px;height:11px;background:linear-gradient(#2a2a2a,#3a3a3a 50%,#2a2a2a)"></div>
<div class="a" style="left:144.500px;top:520px;width:0;height:0;border-top:2.5px solid transparent;border-bottom:2.5px solid transparent;border-right:3.5px solid #a8a8a8"></div>
<div class="a" style="left:360px;top:517.5px;width:102.500px;height:10px;border-radius:4px;background:#6c6c6c"></div>
<div class="a" style="left:814px;top:520px;width:0;height:0;border-top:2.5px solid transparent;border-bottom:2.5px solid transparent;border-left:3.5px solid #a8a8a8"></div>

<!-- right panels -->
<div class="a" style="left:824px;top:56px;width:200px;height:472px;background:#252525"></div>
<!-- Hoa tiêu -->
<div class="ph" style="left:824px;top:56.5px;width:200px;padding-right:18px">Hoa tiêu<svg class="a" style="left:182px;top:1.8px" width="16" height="7.1" viewBox="0 0 18 8" fill="none" stroke="#bbb"><path d="M4.5 1.5H1.5V6.5H6.5V4" stroke-width=".9"/><path d="M3.5 4.5L6.800 1.200M4.800 1H7V3.200" stroke-width=".9"/><path d="M11.500 1.500L15.500 6.500M15.500 1.500L11.500 6.500" stroke-width="1.3" stroke="#c8c8c8"/></svg></div>
<div class="nb" style="left:825.8px"><svg viewBox="0 0 17 17" fill="none" stroke="#f0f0f0"><circle cx="7.200" cy="7.200" r="3.500" stroke-width="1.200"/><path d="M9.800 9.800L13.300 13.300" stroke-width="1.700"/><path d="M7.200 5.200V9.200M6.300 5.900L7.200 5.200" stroke-width="1"/></svg></div>
<div class="a" style="left:845.5px;top:75px;width:1px;height:9px;background:#555"></div>
<div class="nb" style="left:848px"><svg viewBox="0 0 17 17" fill="none" stroke="#f0f0f0"><circle cx="7.200" cy="7.200" r="3.500" stroke-width="1.200"/><path d="M9.800 9.800L13.300 13.300" stroke-width="1.700"/><path d="M5.200 7.200H9.200M7.200 5.200V9.200" stroke-width="1.100"/></svg></div>
<div class="nb" style="left:867px"><svg viewBox="0 0 17 17" fill="none" stroke="#f0f0f0"><rect x="2.500" y="3.500" width="12" height="10" stroke-width="1.200"/><path d="M5 8V5.800H7.200M12 8V5.800H9.800M5 9V11.200H7.200M12 9V11.200H9.800" stroke-width="1"/></svg></div>
<div class="nb" style="left:885.8px"><svg viewBox="0 0 17 17" fill="none" stroke="#f0f0f0"><circle cx="7.200" cy="7.200" r="3.500" stroke-width="1.200"/><path d="M9.800 9.800L13.300 13.300" stroke-width="1.700"/><path d="M5.200 7.200H9.200" stroke-width="1.100"/></svg></div>
<div class="a" style="left:905.5px;top:75px;width:1px;height:9px;background:#555"></div>
<div class="nb" style="left:908.5px"><svg viewBox="0 0 17 17" fill="none" stroke="#f0f0f0"><path d="M8.500 2.800A5.700 5.700 0 1 1 3.200 6.400" stroke-width="1.500"/><path d="M8.900 0.800L5.600 2.900L8.900 5Z" fill="#f0f0f0" stroke="none"/><rect x="6" y="6.500" width="5.400" height="4.400" fill="#f0f0f0" stroke="none" transform="rotate(-18 8.700 8.700)"/></svg></div>
<div class="nb" style="left:927.3px"><svg viewBox="0 0 17 17" fill="none" stroke="#f0f0f0"><rect x="4.500" y="5" width="8" height="7" fill="#f0f0f0" stroke="none"/><path d="M2 3.500H6M2 3.500V6M15 3.500H11M15 3.500V6M2 13.500H6M2 13.500V11M15 13.500H11M15 13.500V11" stroke-width="1.100"/></svg></div>
<div class="nb" style="left:945.8px"><svg viewBox="0 0 17 17" fill="none" stroke="#f0f0f0"><path d="M8.500 2.800A5.700 5.700 0 1 0 13.800 6.400" stroke-width="1.500"/><path d="M8.100 0.800L11.400 2.900L8.100 5Z" fill="#f0f0f0" stroke="none"/><rect x="5.600" y="6.500" width="5.400" height="4.400" fill="#f0f0f0" stroke="none" transform="rotate(18 8.300 8.700)"/></svg></div>
<div class="a" style="left:965px;top:75px;width:1px;height:9px;background:#555"></div>
<div class="nb" style="left:968.2px"><svg viewBox="0 0 17 17" fill="none" stroke="#f0f0f0"><rect x="3" y="6.500" width="4.200" height="7" fill="#f0f0f0" stroke="none"/><rect x="9.500" y="6.500" width="4.200" height="7" stroke-width="1"/><path d="M5 4.800C5.500 2.600 10.500 2 12 4.200" stroke-width="1.100"/><path d="M12.800 2.500V5H10.300Z" fill="#f0f0f0" stroke="none"/></svg></div>
<div class="a" style="left:824px;top:89.5px;width:200px;height:50.5px;background:#4a4a4a"></div>
<div class="a" style="left:906.8px;top:89.5px;width:34.500px;height:50.5px;background:#fff"></div>
<svg class="a" style="left:906px;top:112px" width="24" height="18" viewBox="906 112 24 18"><path d="M911.200 117.800L923 116.500L923.800 124.800L912 126.200Z" fill="#f4f4f4" stroke="#e02020" stroke-width="1.100"/><path d="M915 121.500H920M917.500 119.500V123.500" stroke="#c8b8b8" stroke-width=".6"/></svg>
<!-- Lớp -->
<div class="ph" style="left:824px;top:143.6px;width:200px;padding-right:18px">Lớp<svg class="a" style="left:182px;top:1.8px" width="16" height="7.1" viewBox="0 0 18 8" fill="none" stroke="#bbb"><path d="M4.500 1.500H1.500V6.500H6.500V4" stroke-width=".9"/><path d="M3.500 4.500L6.800 1.200M4.800 1H7V3.200" stroke-width=".9"/><path d="M11.500 1.500L15.500 6.500M15.500 1.500L11.500 6.500" stroke-width="1.3" stroke="#c8c8c8"/></svg></div>
<div class="t" style="left:827px;top:163px;font-size:8.800px;color:#d0d0d0;letter-spacing:-0.1px">Độ trong</div>
<div class="a" style="left:877.5px;top:160.3px;width:112.500px;height:12px;background:linear-gradient(90deg,#74bff7,#4a92d2);border-bottom:1px solid #1c1c1c"></div>
<div class="t" style="left:995.5px;top:163px;font-size:8.800px;color:#d0d0d0">100 %</div>
<div class="t" style="left:827px;top:180.5px;font-size:8.800px;color:#d0d0d0;letter-spacing:-0.1px">Pha trộn</div>
<div class="a" style="left:880px;top:178px;width:140.500px;height:13.600px;background:#444"></div>
<div class="t" style="left:881.5px;top:180.5px;font-size:8.800px;color:#bdbdbd;letter-spacing:-0.3px">Bình thường</div>
<div class="a" style="left:1014px;top:183.500px;width:0;height:0;border-left:2px solid transparent;border-right:2px solid transparent;border-top:2.500px solid #888"></div>
<div class="a" style="left:829.5px;top:200.5px;width:6.5px;height:6.5px;border:0.8px solid #9a9a9a;border-radius:1px"></div>
<div class="t" style="left:839.5px;top:199.800px;font-size:8.800px;color:#d0d0d0;letter-spacing:-0.28px">Bảo vệ alpha</div>
<div class="a" style="left:895.5px;top:200.5px;width:6.5px;height:6.5px;border:0.8px solid #484848;border-radius:1px"></div>
<div class="t" style="left:906px;top:199.800px;font-size:8.800px;color:#6c6c6c;letter-spacing:-0.3px">Xén bớt</div>
<div class="a" style="left:961.5px;top:200.5px;width:6.5px;height:6.5px;border:0.8px solid #9a9a9a;border-radius:1px"></div>
<div class="t" style="left:972.5px;top:199.800px;font-size:8.800px;color:#d0d0d0;letter-spacing:-0.5px">Khóa</div>
<div class="a" style="left:825.8px;top:213.400px;width:186.500px;height:136.600px;background:linear-gradient(#333 0,#333 32px,#4a4a4a 32px)"></div>
<div class="a" style="left:825.8px;top:213.400px;width:186.500px;height:30.300px;background:#5a5a5a"></div>
<div class="a" style="left:825.8px;top:244.500px;width:186.500px;height:31.600px;background:#5a5a5a"></div>
<div class="a" style="left:840.9px;top:244.500px;width:171.400px;height:31.600px;background:#4d97d3"></div>
<div class="a" style="left:829px;top:224.800px;width:8px;height:8px;border-radius:50%;background:#e2e2e2"></div>
<div class="a" style="left:829px;top:256.800px;width:8px;height:8px;border-radius:50%;background:#e2e2e2"></div>
<div class="a" style="left:856.2px;top:214px;width:20px;height:28px;background-color:#fff;background-image:linear-gradient(45deg,#ececec 25%,transparent 25%,transparent 75%,#ececec 75%),linear-gradient(45deg,#ececec 25%,transparent 25%,transparent 75%,#ececec 75%);background-size:4px 4px;background-position:0 0,2px 2px"></div>
<div class="a" style="left:856.2px;top:246px;width:20px;height:28px;background-color:#fff;background-image:linear-gradient(45deg,#ececec 25%,transparent 25%,transparent 75%,#ececec 75%),linear-gradient(45deg,#ececec 25%,transparent 25%,transparent 75%,#ececec 75%);background-size:4px 4px;background-position:0 0,2px 2px"></div>
<div class="t" style="left:894px;top:222.500px;font-size:10.6px;color:#fff;letter-spacing:-0.5px">Lớp2</div>
<div class="t" style="left:894px;top:254.500px;font-size:10.6px;color:#fff;font-weight:bold;letter-spacing:-0.2px">Lớp1</div>
<svg class="a" style="left:995.5px;top:253.500px" width="15" height="15" viewBox="0 0 15 15" fill="none" stroke="#fff"><circle cx="7.500" cy="7.500" r="3.400" stroke-width="2.600"/><path d="M7.500 0.800V3M7.500 12V14.200M0.800 7.500H3M12 7.500H14.200M2.800 2.800L4.300 4.300M10.700 10.700L12.200 12.200M12.200 2.800L10.700 4.300M4.300 10.700L2.800 12.200" stroke-width="2.400"/></svg>
<div class="a" style="left:1012.5px;top:213.400px;width:11.500px;height:137px;background:#2c2c2c"></div>
<div class="a" style="left:1015.5px;top:214.500px;width:0;height:0;border-left:2.500px solid transparent;border-right:2.500px solid transparent;border-bottom:3.2px solid #a0a0a0"></div>
<div class="a" style="left:1013.5px;top:219px;width:9.500px;height:124px;border-radius:4px;background:linear-gradient(90deg,#666,#7a7a7a,#666)"></div>
<div class="a" style="left:1015.5px;top:345.500px;width:0;height:0;border-left:2.500px solid transparent;border-right:2.500px solid transparent;border-top:3.2px solid #a0a0a0"></div>
<!-- layer buttons -->
<div class="sb" style="left:826.7px;top:352px;height:16.500px"><svg viewBox="0 0 17 16.500" fill="none" stroke="#f0f0f0" stroke-width="1.100"><path d="M4 2.800H10L13 5.800V14H4Z"/><path d="M10 2.800V5.800H13" stroke-width=".9"/></svg></div>
<div class="sb" style="left:846px;top:352px;height:16.500px"><svg viewBox="0 0 17 16.500" fill="none" stroke="#f0f0f0" stroke-width="1.100"><path d="M4 2.800H10L13 5.800V14H4Z"/></svg><div class="t" style="left:6px;top:6.500px;font-size:7px;color:#f0f0f0;font-weight:bold">8</div></div>
<div class="sb" style="left:864.5px;top:352px;height:16.500px"><svg viewBox="0 0 17 16.500" fill="none" stroke="#f0f0f0" stroke-width="1.100"><path d="M4 2.800H10L13 5.800V14H4Z"/></svg><div class="t" style="left:6.300px;top:6.500px;font-size:7px;color:#f0f0f0;font-weight:bold">1</div></div>
<div class="sb" style="left:883px;top:352px;width:20.500px;height:16.500px"><svg viewBox="0 0 20.500 16.500" fill="none" stroke="#f0f0f0" stroke-width="1.100"><path d="M9.500 11.500H3.500V2.800H8.500L11 5.300V7.500" stroke="#bbb"/><path d="M9.800 8V14M6.800 11H12.800" stroke-width="1.600"/><path d="M14.500 11H18L16.200 13.200Z" fill="#f0f0f0" stroke="none"/></svg></div>
<div class="sb" style="left:905.5px;top:352px;height:16.500px"><svg viewBox="0 0 17 16.500"><path d="M3 4H7.200L8.400 5.200H14V13.200H3Z" fill="#f0f0f0"/></svg></div>
<div class="a" style="left:925px;top:356px;width:1px;height:9px;background:#3a3a3a"></div>
<div class="sb" style="left:928px;top:352px;height:16.500px"><svg viewBox="0 0 17 16.500" fill="none" stroke="#f0f0f0" stroke-width="1.200"><rect x="3.500" y="6" width="7.500" height="7.500"/><path d="M6 6V3.500H13.500V11H11"/></svg></div>
<div class="sb" style="left:946.6px;top:352px;height:16.500px;background:#222"><svg viewBox="0 0 17 16.500"><rect x="2.500" y="3" width="3.500" height="3.500" fill="#f0f0f0"/><rect x="2.500" y="10" width="3.500" height="3.500" fill="#f0f0f0"/><path d="M4.200 6.500V10M4.200 8.200H8.500" stroke="#f0f0f0" stroke-width="1" fill="none"/><rect x="8.500" y="5.800" width="6" height="5" fill="#f0f0f0"/></svg></div>
<div class="a" style="left:966px;top:356px;width:1px;height:9px;background:#3a3a3a"></div>
<div class="sb" style="left:969px;top:352px;height:16.500px"><svg viewBox="0 0 17 16.500" fill="none" stroke="#f0f0f0"><path d="M3.200 5H13.800M6.500 4.600V3H10.500V4.600" stroke-width="1.300"/><path d="M4.400 6.200H12.600V14H4.400Z" stroke-width="1.200"/><path d="M7.200 7.500V13M9.800 7.500V13" stroke-width="1.300"/></svg></div>
<!-- Brush Size -->
<div class="ph" style="left:824px;top:375.500px;width:200px;padding-right:18px">Brush Size<svg class="a" style="left:182px;top:1.8px" width="16" height="7.1" viewBox="0 0 18 8" fill="none" stroke="#bbb"><path d="M4.500 1.500H1.500V6.500H6.500V4" stroke-width=".9"/><path d="M3.500 4.500L6.800 1.200M4.800 1H7V3.200" stroke-width=".9"/><path d="M11.500 1.500L15.500 6.500M15.500 1.500L11.500 6.500" stroke-width="1.3" stroke="#c8c8c8"/></svg></div>
<div class="a" style="left:824px;top:389px;width:189.500px;height:139px;background:#4a4a4a"></div>
<svg class="a" style="left:824px;top:389px" width="190" height="120" viewBox="824 389 190 120" font-family="'Liberation Sans',sans-serif" font-size="8" fill="#e6e6e6" text-anchor="middle">
<rect x="824" y="389" width="190" height="119" fill="#565656"/>
<g stroke="#474747" stroke-width="1"><path d="M824 428.500H1014M824 468.500H1014M824 508.500H1014M855.500 389V508M887.500 389V508M919.500 389V508M951.500 389V508M983.500 389V508"/></g>
<circle cx="872" cy="405.800" r="1" fill="#5e5e5e"/><circle cx="904" cy="405.800" r="1.100" fill="#6c6c6c"/><circle cx="936" cy="405.800" r="1.300" fill="#9a9a9a"/><circle cx="968" cy="405.800" r="1.400" fill="#e8e8e8"/><circle cx="1000" cy="405.800" r="1.600" fill="#f0f0f0"/>
<g fill="#f0f0f0"><circle cx="840" cy="445.600" r="3.200"/><circle cx="872" cy="445.600" r="4.200"/><circle cx="904" cy="445.600" r="5.500"/><circle cx="936" cy="445.600" r="6.700"/><circle cx="968" cy="445.600" r="8.200"/><circle cx="1000" cy="445.600" r="9.700"/>
<circle cx="840" cy="485.700" r="9.800"/><circle cx="872" cy="485.700" r="9.800"/><circle cx="904" cy="485.700" r="9.800"/><circle cx="936" cy="485.700" r="9.800"/><circle cx="968" cy="485.700" r="9.800"/><circle cx="1000" cy="485.700" r="9.800"/></g>
<text x="839" y="426.300">1</text><text x="872" y="426.300">1.5</text><text x="904" y="426.300">2</text><text x="936" y="426.300">3</text><text x="968" y="426.300">4</text><text x="1000" y="426.300">5</text>
<text x="840" y="466.500">12</text><text x="872" y="466.500">15</text><text x="904" y="466.500">20</text><text x="936" y="466.500">25</text><text x="968" y="466.500">30</text><text x="1000" y="466.500">40</text>
<text x="840" y="506.500">100</text><text x="872" y="506.500">150</text><text x="904" y="506.500">200</text><text x="936" y="506.500">300</text><text x="968" y="506.500">400</text><text x="1000" y="506.500">500</text>
</svg>
<div class="a" style="left:1013.5px;top:389px;width:10.500px;height:139px;background:#2c2c2c"></div>
<div class="a" style="left:1016px;top:391px;width:0;height:0;border-left:2.500px solid transparent;border-right:2.500px solid transparent;border-bottom:3.2px solid #a0a0a0"></div>
<div class="a" style="left:1014px;top:396px;width:9.500px;height:125px;border-radius:4px;background:linear-gradient(90deg,#666,#7a7a7a,#666)"></div>
<div class="a" style="left:1016px;top:523.500px;width:0;height:0;border-left:2.500px solid transparent;border-right:2.500px solid transparent;border-top:3.2px solid #a0a0a0"></div>

<!-- status bar -->
<div class="a" style="left:0;top:527.5px;width:1024px;height:16.2px;background:#232323"></div>
<div class="t st" style="left:3px;top:531.5px">2507 * 3541 pixel</div>
<div class="t st" style="left:85px;top:531.5px">(18.2 * 25.7cm)</div>
<div class="t st" style="left:158px;top:531.5px">350 dpi</div>
<div class="t st" style="left:198px;top:531.5px">150 %</div>
<div class="t st" style="left:232px;top:531.5px">( 886, 2461 )</div>
<div class="t st" style="left:294px;top:531.5px" id="stl">Vẽ một đường thẳng bằng cách giữ phím Shift, Thay đổi cỡ cọ bằng cách giữ phím Ctrl, Alt và kéo</div>

<!-- taskbar -->
<div class="a" style="left:0;top:543.5px;width:1024px;height:32.5px;background:linear-gradient(90deg,#262626 0,#272727 35%,#2d2a27 52%,#272524 70%,#202121 100%)"></div>
<div class="a" style="left:275.5px;top:543.5px;width:40px;height:32.5px;background:#4e4e4e"></div>
<div class="a" style="left:315.5px;top:543.5px;width:40px;height:32.5px;background:#c8651d"></div>
<div class="a" style="left:199.5px;top:574px;width:32.5px;height:2px;background:#7ab6e6"></div>
<div class="a" style="left:239.5px;top:574px;width:32.5px;height:2px;background:#7ab6e6"></div>
<div class="a" style="left:275.5px;top:574px;width:40px;height:2px;background:#8fc2ea"></div>
<div class="a" style="left:315.5px;top:574px;width:40px;height:2px;background:#f28a3c"></div>
<div class="a" style="left:359.5px;top:574px;width:32.5px;height:2px;background:#7ab6e6"></div>
<div class="a" style="left:399.5px;top:574px;width:32.5px;height:2px;background:#7ab6e6"></div>
<svg class="a" style="left:0;top:543.5px" width="1024" height="32.5" viewBox="0 543.5 1024 32.5">
<!-- start -->
<g fill="#fff"><path d="M13 554.800L18.600 554V559.300H13ZM19.400 553.900L26.200 552.900V559.300H19.400ZM13 560.100H18.600V565.400L13 564.600ZM19.400 560.100H26.200V566.500L19.400 565.500Z"/></g>
<!-- search -->
<g fill="none" stroke="#fff" stroke-width="1.200"><circle cx="59.500" cy="557.500" r="4.300"/><path d="M56.400 560.800L51.500 566"/></g>
<!-- cortana -->
<circle cx="96" cy="560" r="5.400" fill="none" stroke="#fff" stroke-width="1.800"/>
<!-- task view -->
<g fill="none" stroke="#fff" stroke-width="1.100"><rect x="128.500" y="556" width="8" height="8"/><path d="M127.500 553.500H137.500M127.500 566.500H137.500"/><path d="M140.500 557V559M140.500 561.500V563" stroke-width="1.300"/></g>
<!-- mail -->
<path d="M165 557.500L175.500 551L186 557.500Z" fill="#0f6cbd"/><rect x="165" y="557.300" width="21" height="11.400" fill="#2aa6ea"/><path d="M166.800 555.800H184.200L175.500 563.200Z" fill="#f2f7fb"/><path d="M165 568.700L175.500 561.500L186 568.700Z" fill="#1b90da"/>
<!-- folder -->
<path d="M206.500 553H213L214.500 554.800H224.500V567.800H206.500Z" fill="#f6c342"/><path d="M206.500 556.500H224.500V567.800H206.500Z" fill="#fbd768"/><path d="M210.500 561.500H220.500V567.800H210.500Z" fill="#2e8bd6"/><path d="M212.500 564H218.500V567.800H212.500Z" fill="#fbd768"/>
<!-- zalo -->
<rect x="245.800" y="550.500" width="19.500" height="18.500" rx="5.500" fill="#fff"/><path d="M246 553C246 560 248 566 253 569H250C247.500 569 245.800 567 245.800 564.500Z" fill="#1e6fe0"/>
<!-- medibang -->
<defs><linearGradient id="mbg" x1="0" y1="0" x2="1" y2="1"><stop offset="0" stop-color="#4fc05a"/><stop offset=".55" stop-color="#1fa8a0"/><stop offset="1" stop-color="#1f6fd0"/></linearGradient><linearGradient id="edg" x1="0" y1="0" x2="1" y2="0"><stop offset="0" stop-color="#2489d6"/><stop offset=".5" stop-color="#35b5b0"/><stop offset="1" stop-color="#5ad86a"/></linearGradient></defs>
<rect x="286" y="550.500" width="19" height="19" rx="4.500" fill="#f4f4f4"/>
<ellipse cx="295.300" cy="561.300" rx="5.300" ry="5.600" fill="url(#mbg)"/>
<path d="M294.500 557.500C295 554.500 298 553 300.500 553.500C300 555 301 556.500 300.500 558.500C300 560.500 298 561.500 296 561Z" fill="#ee4a30"/><path d="M296.500 556C297.500 554.500 299 554 300.300 554.200C300 555.500 299 557 297.300 557.500Z" fill="#f6a21e"/>
<!-- edge -->
<circle cx="335.300" cy="560" r="10" fill="url(#edg)"/>
<path d="M325.400 561C325.500 555 330 552.500 334.500 553.500C330.500 555.500 329.500 560 331.500 564.500C333.500 568.500 339.500 570 344 566.500C341.500 570 337.500 570.500 334.500 570C329.500 569.300 325.300 565.500 325.400 561Z" fill="#1560c0"/>
<path d="M336.800 561C337 558.500 340 556.500 343 557.500C345 558.200 345.600 560.500 345.200 562C344.500 564.200 342 564.800 340 564.500C338 564.200 336.600 563 336.800 561Z" fill="#c8651d"/>
<!-- coc coc -->
<circle cx="375.500" cy="560.500" r="8.700" fill="#82c341"/><circle cx="375.500" cy="560.500" r="5.600" fill="none" stroke="#fff" stroke-width="1.300"/><circle cx="375.500" cy="560.500" r="2.300" fill="#fff"/><path d="M378 552L384.500 550.500L383.500 557.500Z" fill="#fff"/><path d="M379.500 556.500L383.500 552M381 557.500L384.500 554.500" stroke="#e04a2a" stroke-width=".9"/>
<!-- paint -->
<path d="M406 561.500C406 556.500 411 552.500 417 552.500C422.500 552.500 425.500 556 425 559.500C424.500 562.500 421.500 562.500 420 563.500C418.500 564.500 420 566.500 418 568C415.500 569.500 406 568.500 406 561.500Z" fill="#d3deea" stroke="#8fa0b4" stroke-width=".6"/><circle cx="410" cy="559" r="1.700" fill="#e84d3c"/><circle cx="413.500" cy="556" r="1.700" fill="#f1b928"/><circle cx="418.500" cy="556" r="1.700" fill="#4fae4a"/><circle cx="410.500" cy="564" r="1.700" fill="#3b7fd4"/><path d="M416 563L424.500 550.500L426 551.500L418 564.500Z" fill="#c9913f" stroke="#7a5520" stroke-width=".4"/><path d="M414.500 566.500L416 563L418 564.500Z" fill="#444"/>
<!-- battery widget -->
<rect x="617" y="552" width="41" height="17" fill="#050505" stroke="#e8e8e8" stroke-width="1"/><rect x="658.300" y="556.500" width="1.800" height="8" fill="#e8e8e8"/>
<rect x="617.500" y="552.500" width="10" height="16" fill="#1fa23a"/>
<!-- news -->
<g fill="none" stroke="#fff" stroke-width="1.100"><rect x="792" y="554.500" width="16" height="12" rx="1.200"/><path d="M808 557H811V564.500C811 566 808 566.500 808 565"/><rect x="794.500" y="557" width="5" height="4.500"/><path d="M801.500 557.500H806M801.500 560H806M794.500 563.800H806"/></g>
<!-- tray -->
<path d="M824.500 562.500L829.500 557.500L834.500 562.500" fill="none" stroke="#fff" stroke-width="1.100"/>
<g><rect x="843.500" y="557" width="11" height="6.500" fill="none" stroke="#fff" stroke-width="1"/><rect x="843.500" y="557" width="3.500" height="6.500" fill="#fff"/><rect x="855" y="559" width="1.200" height="2.500" fill="#fff"/></g>
<g fill="none" stroke="#9aa0a4" stroke-width="1.100"><path d="M865 563A9 9 0 0 1 874 555.500"/><path d="M867.800 564A6 6 0 0 1 874 558.500"/><path d="M870.500 565A3 3 0 0 1 874 562"/></g><circle cx="873.500" cy="565" r="1" fill="#9aa0a4"/>
<g fill="none" stroke="#b8bcc0" stroke-width="1"><path d="M881.500 558.500H884L887.500 555.500V565.500L884 562.500H881.500Z"/><path d="M889.500 558.500L893 562M893 558.500L889.500 562"/></g>
<path d="M990.500 554.500H1003.500V564H999.500L997 567L996.800 564H990.500Z" fill="none" stroke="#fff" stroke-width="1.100"/>
<path d="M1020.500 547V573" stroke="#555" stroke-width="1"/>
</svg>
<div class="t" style="left:248.200px;top:556.300px;font-size:6.600px;font-weight:bold;color:#1e6fe0;letter-spacing:-0.2px">Zalo</div>
<div class="t" style="left:626px;top:554px;font-size:12.5px;color:#fff;letter-spacing:-0.5px">0:34</div>
<div class="t" style="left:903px;top:556px;font-size:9px;color:#fff;letter-spacing:-0.6px">ENG</div>
<div class="t" style="left:936px;top:547.500px;font-size:9.500px;color:#fff;letter-spacing:-0.1px">7:35 PM</div>
<div class="t" style="left:931px;top:562.800px;font-size:9.500px;color:#fff;letter-spacing:0.15px">8/19/2021</div>

</body>
</html>
